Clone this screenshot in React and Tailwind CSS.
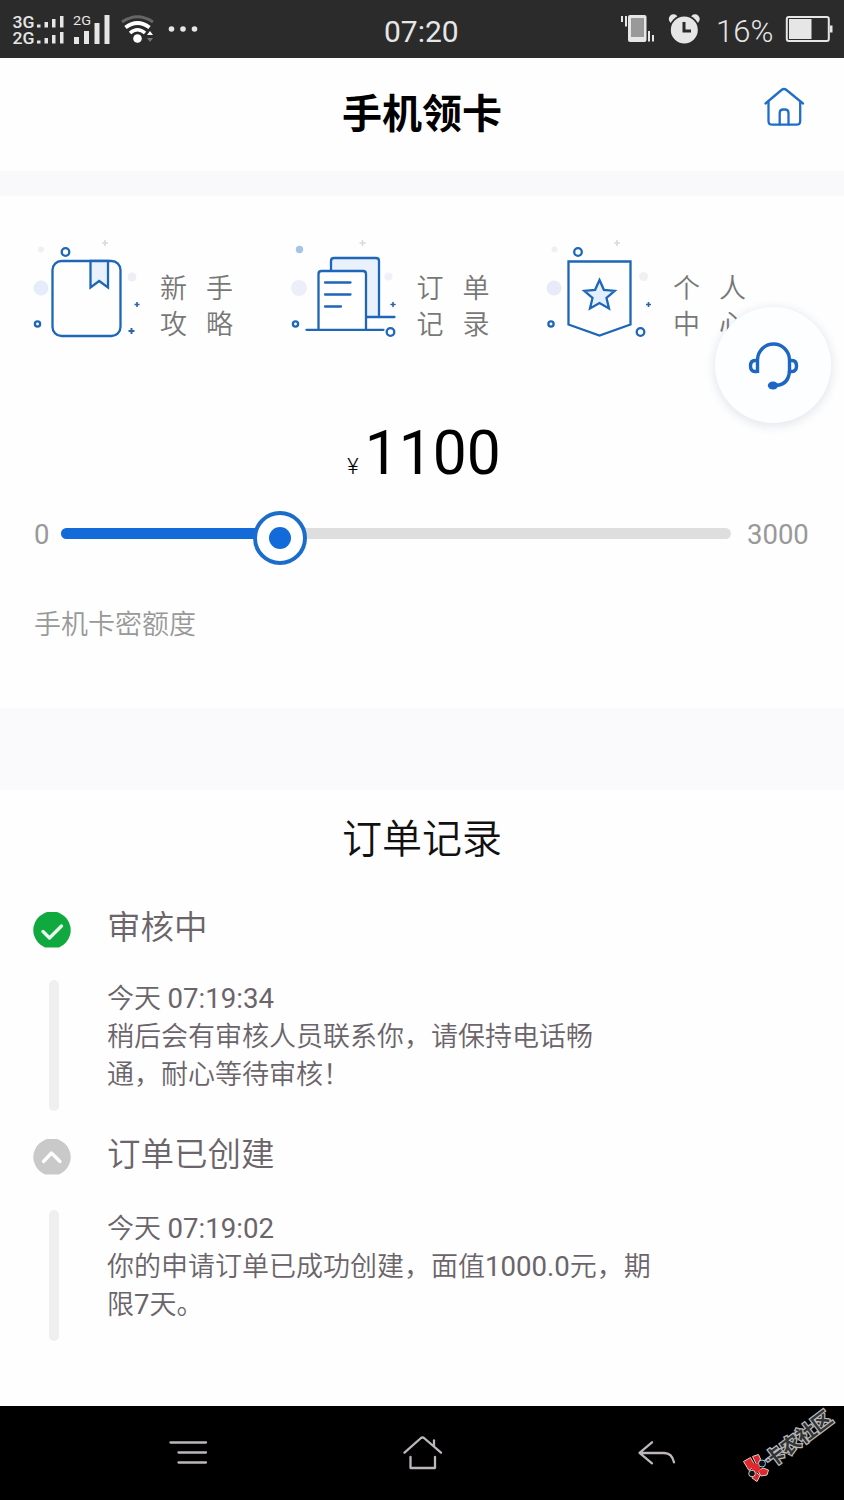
const Plus = ({ x, y, r = 2.5, color = '#2f62a8', width = 1.6 }) => (
  <path d={`M${x - r} ${y}h${r * 2}M${x} ${y - r}v${r * 2}`} stroke={color} strokeWidth={width} />
);

const SignalIcons = () => (
  <svg className="h-[58px] w-[205px]" viewBox="0 0 205 58" fill="#e6e6e6">
    <g fontFamily="Roboto, sans-serif" fontWeight="500">
      <text x="12.500" y="28" fontSize="17" textLength="22" lengthAdjust="spacingAndGlyphs">3G</text>
      <text x="12.500" y="44" fontSize="17" textLength="22" lengthAdjust="spacingAndGlyphs">2G</text>
      <text x="73" y="24.500" fontSize="13.500" textLength="18" lengthAdjust="spacingAndGlyphs" fontWeight="400">2G</text>
    </g>
    <path d="M37 24.5h3.5v3H37zM44.500 22h3.500v5.500h-3.500zM52 19h3.500v8.500H52zM60 16h3.500v11.500H60z" />
    <path d="M37 40.500h3.500v3H37zM44.500 38h3.500v5.500h-3.500zM52 35h3.500v8.500H52zM60 32h3.500v11.500H60z" />
    <path d="M74 37h5v7h-5zM84 31h5v13h-5zM94.500 23h5v21h-5zM104.500 15h5v29h-5z" />
    <g fill="none" strokeLinecap="butt">
      <path d="M122 22Q137.500 11.500 153 22" stroke="#666" strokeWidth="3" />
      <path d="M125.500 27.500Q137.500 18.500 149.500 27.500" stroke="#fff" strokeWidth="4" />
      <path d="M130 33Q137.500 26.500 145 33" stroke="#fff" strokeWidth="3.500" />
    </g>
    <circle cx="137.500" cy="38.500" r="4.300" fill="#fff" />
    <path d="M147 35l3-4 3 4z" fill="#fff" />
    <path d="M147 38l3 4 3-4z" fill="#777" />
    <circle cx="171.500" cy="29" r="2.800" />
    <circle cx="183" cy="29" r="2.800" />
    <circle cx="194.500" cy="29" r="2.800" />
  </svg>
);

const VibrateAlarmIcons = () => (
  <svg className="h-[58px] w-[84px]" viewBox="618 0 84 58" fill="#e6e6e6">
    <path d="M621 16h2v6h-2zM625 16h2v10.500h-2zM648 31h2v10.500h-2zM652 35h2v6.500h-2z" />
    <rect x="628" y="15" width="18.500" height="27" rx="2" />
    <rect x="631" y="18" width="13" height="19" fill="#999" />
    <circle cx="673.500" cy="19" r="4.700" />
    <circle cx="695" cy="19" r="4.700" />
    <circle cx="684.300" cy="30" r="15.200" fill="#2b2b2b" />
    <circle cx="684.300" cy="30" r="13.500" />
    <path d="M684 22v9h7" fill="none" stroke="#2b2b2b" strokeWidth="3" />
  </svg>
);

const StatusBar = () => (
  <div className="flex h-[58px] items-center bg-[#2b2b2b] text-[#e6e6e6]">
    <SignalIcons />
    <span className="ml-[179px] w-[76px] pt-1.5 text-[30px] leading-none">07:20</span>
    <div className="ml-[158px]">
      <VibrateAlarmIcons />
    </div>
    <span className="ml-3.5 w-[60px] pt-1 text-[31px] leading-none font-[350]">16%</span>
    <svg className="ml-2 h-[58px] w-[50px]" viewBox="784 0 50 58">
      <rect x="786.800" y="17" width="42" height="24" rx="2" fill="none" stroke="#e6e6e6" strokeWidth="2" />
      <path d="M789 19h22.500v20H789z" fill="#e6e6e6" />
      <path d="M830 25.500h2.500v7H830z" fill="#e6e6e6" />
    </svg>
  </div>
);

const HomeIcon = () => (
  <svg className="h-11 w-11" viewBox="762 84 44 44" fill="none" stroke="#1f6fc9" strokeWidth="2.300" strokeLinecap="round" strokeLinejoin="round">
    <path d="M765.500 103.500L781.500 90q2.500-2 5 0L803 103.500" />
    <path d="M768.500 101.500V121q0 3.700 3.700 3.700h24.300q3.700 0 3.700-3.700V101.500" />
    <path d="M779.700 124.500V113q0-3.500 3.500-3.500h1.800q3.500 0 3.500 3.500v11.500" />
  </svg>
);

const GuideIcon = () => (
  <svg className="h-[106px] w-[116px]" viewBox="30 236 116 106" fill="none" stroke="#1e66b8" strokeWidth="2.300">
    <circle cx="41" cy="288" r="7.500" fill="#e6ecf9" stroke="none" />
    <circle cx="41" cy="249.500" r="3" fill="#f0f0f3" stroke="none" />
    <circle cx="132" cy="277" r="4.500" fill="#eeeff4" stroke="none" />
    <Plus x={105} y={243} r={3} color="#d9d9df" />
    <circle cx="65.500" cy="252" r="3.800" />
    <circle cx="37.500" cy="324" r="2.600" />
    <rect x="52.500" y="261" width="68" height="75" rx="9" />
    <path d="M90.500 261h17.500v26.500l-8.800-6.500-8.700 6.500z" fill="#e9f2fc" />
    <Plus x={137} y={304.5} />
    <Plus x={131.5} y={331} r={3} width={2} />
  </svg>
);

const OrderIcon = () => (
  <svg className="h-[106px] w-[116px]" viewBox="286.500 236 116 106" fill="none" stroke="#1e66b8" strokeWidth="2.300" strokeLinecap="round">
    <circle cx="298.500" cy="288" r="8" fill="#eceffa" stroke="none" />
    <circle cx="299" cy="249.500" r="3.700" fill="#a9c3e6" stroke="none" />
    <circle cx="388" cy="276.500" r="4" fill="#f0f0fa" stroke="none" />
    <Plus x={362} y={243} r={2.5} color="#d9d9df" />
    <path d="M330.500 271v-10q0-3 3-3h42q3 0 3 3v56h-13v-43z" fill="#e9f1fc" stroke="none" />
    <path d="M330.500 270v-9q0-3 3-3h42q3 0 3 3v56M366 317h28" />
    <path d="M318 329V274q0-3 3-3h41.500q3 0 3 3v55" fill="#fff" />
    <path d="M306 329.800h77" />
    <path d="M324.500 282.500h25.500M324.500 294.500h25.500M324.500 306.500h16" />
    <circle cx="295" cy="324" r="2.600" />
    <circle cx="390" cy="332" r="3.800" />
    <Plus x={392.5} y={304.5} r={2} />
  </svg>
);

const ProfileIcon = () => (
  <svg className="h-[106px] w-[116px]" viewBox="543 236 116 106" fill="none" stroke="#1e66b8" strokeWidth="2.300">
    <circle cx="554" cy="288" r="7.500" fill="#e8eaf9" stroke="none" />
    <circle cx="554.500" cy="249.500" r="3" fill="#f0f0f3" stroke="none" />
    <circle cx="643.500" cy="276.500" r="4.500" fill="#f0f0f3" stroke="none" />
    <Plus x={617} y={243} r={3} color="#d9d9df" />
    <circle cx="578" cy="252" r="3.800" />
    <circle cx="551" cy="324" r="2.600" />
    <circle cx="640.500" cy="332" r="3.800" />
    <path d="M568.500 261.500h62V324.500l-31 11-31-11z" />
    <path d="M599.500 280l4.400 9.800 10.800 1-8.200 7.200 2.500 10.500-9.500-5.500-9.500 5.500 2.500-10.500-8.200-7.200 10.800-1z" fill="#e3effc" />
    <Plus x={648.5} y={304.5} />
  </svg>
);

const entries = [
  { icon: GuideIcon, lines: ['新手', '攻略'] },
  { icon: OrderIcon, lines: ['订单', '记录'] },
  { icon: ProfileIcon, lines: ['个人', '中心'] },
];

const ServiceButton = () => (
  <button className="absolute top-[307px] left-[715px] flex size-[116px] items-center justify-center rounded-full bg-[#fdfeff] shadow-[0_2px_8px_2px_rgba(70,90,130,0.13)]">
    <svg className="h-14 w-14" viewBox="745 337 56 56" fill="none" stroke="#1d66c4" strokeWidth="3.400">
      <path d="M757.500 373v-13a16 16 0 0 1 32 0v13" />
      <path d="M757.500 360.500h-2.500q-4.500 0-4.500 5.500t4.500 5.500h2.500M790 360.500h2q4.500 0 4.500 5.500t-4.500 5.500h-2" />
      <path d="M789.500 371q-1 13.500-13 14.300" />
      <ellipse cx="773" cy="385.500" rx="5.200" ry="4" fill="#1d66c4" stroke="none" />
    </svg>
  </button>
);

const AmountSlider = ({ value, max }) => (
  <div className="mt-[35px] flex h-8 items-center pl-[34px] text-[27.500px] leading-8 text-[#999]">
    <span className="w-[27px]">0</span>
    <div className="relative h-[11px] w-[670px] -translate-y-0.5 rounded-md bg-[#dedede]">
      <div className="h-full rounded-l-md bg-[#136bd9]" style={{ width: `${(value / max) * 87.5 + 0.6}%` }} />
      <div className="absolute -top-[22px] left-[192px] flex size-[54px] translate-y-[5px] items-center justify-center rounded-full border-4 border-[#1b6dcb] bg-white">
        <div className="size-[22px] rounded-full bg-[#136bd9]" />
      </div>
    </div>
    <span className="ml-4">{max}</span>
  </div>
);

const records = [
  {
    done: true,
    title: '审核中',
    time: '今天 07:19:34',
    lines: ['稍后会有审核人员联系你，请保持电话畅', '通，耐心等待审核！'],
  },
  {
    done: false,
    title: '订单已创建',
    time: '今天 07:19:02',
    lines: ['你的申请订单已成功创建，面值1000.0元，期', '限7天。'],
  },
];

const RecordIcon = ({ done }) => (
  <svg className="mt-[11px] h-9 w-[38px] shrink-0" viewBox="0 0 38 36" fill="none" strokeLinecap="round" strokeLinejoin="round">
    <path d="M12 35.500A18.700 18.700 0 1 1 26 35.500z" fill={done ? '#10a93f' : '#c9c9c9'} />
    {done ? (
      <path d="M10 19.500l6.500 6.500 12-12" stroke="#e9ffee" strokeWidth="3.300" />
    ) : (
      <path d="M10.500 22.500l8-8.500 8.500 8.500" stroke="#fff" strokeWidth="3.300" />
    )}
  </svg>
);

// digits are set a step heavier than the surrounding Chinese text
const RecordLine = ({ text }) => (
  <p className="h-[38px]">
    {text.split(/(\d[\d:.]*)/).map((part, i) =>
      i % 2 ? (
        <span key={i} className="text-[27.600px] font-normal">
          {part}
        </span>
      ) : (
        part
      ),
    )}
  </p>
);

const Record = ({ done, title, time, lines }) => (
  <div className="pl-[33px] text-[#6b646b]">
    <div className={done ? 'flex h-[79px] gap-9' : 'flex h-[82px] gap-9'}>
      <RecordIcon done={done} />
      <h3 className="pt-0.5 text-[33.500px] leading-[50px] font-[350]">{title}</h3>
    </div>
    <div className="flex gap-[48px] pl-4">
      <div className="h-[131px] w-2.5 shrink-0 rounded-full bg-[#efefef]" />
      <div className="text-[27px] leading-[38px] font-[350] whitespace-nowrap">
        <RecordLine text={time} />
        {lines.map((line) => (
          <RecordLine key={line} text={line} />
        ))}
      </div>
    </div>
  </div>
);

const Watermark = () => (
  <svg className="absolute right-0 bottom-0 h-[96px] w-[110px] overflow-visible" viewBox="734 1404 110 96">
    <g transform="translate(771.500 1468) rotate(-37)">
      <text
        x="0"
        y="0"
        fontSize="19.500"
        fontWeight="700"
        fill="#333"
        stroke="#b9b9b9"
        strokeWidth="2.500"
        paintOrder="stroke"
        fontFamily="'Noto Sans CJK SC', sans-serif"
      >
        卡农社区
      </text>
    </g>
    <path d="M758 1467l10-9 3 2" fill="none" stroke="#9db6cc" strokeWidth="1.500" />
    <g fill="#e3262b" stroke="#dccfca" strokeWidth="1">
      <path d="M743.500 1461.500l7-4 4.500 8-6 5z" />
      <path d="M752.500 1456.500l6-2 2 4.500-3.500 6.500z" />
      <path d="M758 1471l5-3 5.500 2-1.500 5-6 1z" />
      <path d="M755 1471.500l5 4-3 6-5-3.500z" />
      <path d="M752 1463l6 1 3 5-4 4-5-3z" stroke="none" />
    </g>
    <circle cx="752" cy="1473.500" r="3.300" fill="#111" stroke="#ccc" />
    <circle cx="762" cy="1463.500" r="3.500" fill="#111" stroke="#9fc4e4" />
  </svg>
);

const NavBar = () => (
  <div className="relative h-[94px] bg-black">
    <svg className="h-[94px] w-full" viewBox="0 1406 844 94" fill="none" stroke="#bdb6bd" strokeWidth="2.300" strokeLinecap="round" strokeLinejoin="round">
      <path d="M170.500 1442.500h35.500M178.500 1452.500h27.500M178.500 1462.500h27.500" />
      <path d="M404.500 1452.700l16.500-14.700q1.500-1.200 3 0l17 14.700M434 1440.500v5.500M410.500 1457v11h24.500v-11" />
      <path d="M652 1442.300l-12.500 10.500 12.500 10.500M640 1453h24q8 0 10 9.300" />
    </svg>
    <Watermark />
  </div>
);

export default function App() {
  return (
    <div className="relative flex h-[1500px] w-[844px] flex-col overflow-hidden bg-[#fefefe] font-[Roboto,'Noto_Sans_CJK_SC',sans-serif]" lang="zh-CN">
      <StatusBar />

      <header className="grid h-[113px] grid-cols-[1fr_auto_1fr] pt-[26px]">
        <h1 className="col-start-2 pt-[3px] text-[40px] leading-[56px] font-bold text-black">手机领卡</h1>
        <div className="justify-self-end pr-[38px]">
          <HomeIcon />
        </div>
      </header>
      <div className="h-[25px] bg-[#f9f9fc]" />

      <section className="h-[512px] pt-10">
        <div className="grid grid-cols-[256.500px_256.500px_256.500px] pl-[30px]">
          {entries.map(({ icon: Icon, lines }) => (
            <div key={lines[0]} className="flex h-[106px] gap-3.5">
              <Icon />
              <div className="mt-9 text-[27px] leading-[35.500px] font-[350] tracking-[19px] text-[#777]">
                <p>{lines[0]}</p>
                <p>{lines[1]}</p>
              </div>
            </div>
          ))}
        </div>

        <div className="mt-[82px] flex h-[60px] items-baseline justify-center gap-1.5 pl-1 leading-[60px] text-black">
          <span className="text-[22px] font-light">¥</span>
          <span className="text-[60.500px]">1100</span>
        </div>

        <AmountSlider value={1100} max={3000} />
        <p className="mt-[54px] pl-[34px] text-[27px] leading-10 font-[350] text-[#999]">手机卡密额度</p>
      </section>
      <div className="h-[82px] bg-[#faf9fc]" />

      <section className="flex-1">
        <h2 className="pt-[21px] text-center text-[40px] leading-[58px] font-[350] text-[#111]">订单记录</h2>
        <div className="mt-8 flex flex-col gap-[17px]">
          {records.map((record) => (
            <Record key={record.title} {...record} />
          ))}
        </div>
      </section>

      <NavBar />
      <ServiceButton />
    </div>
  );
}
